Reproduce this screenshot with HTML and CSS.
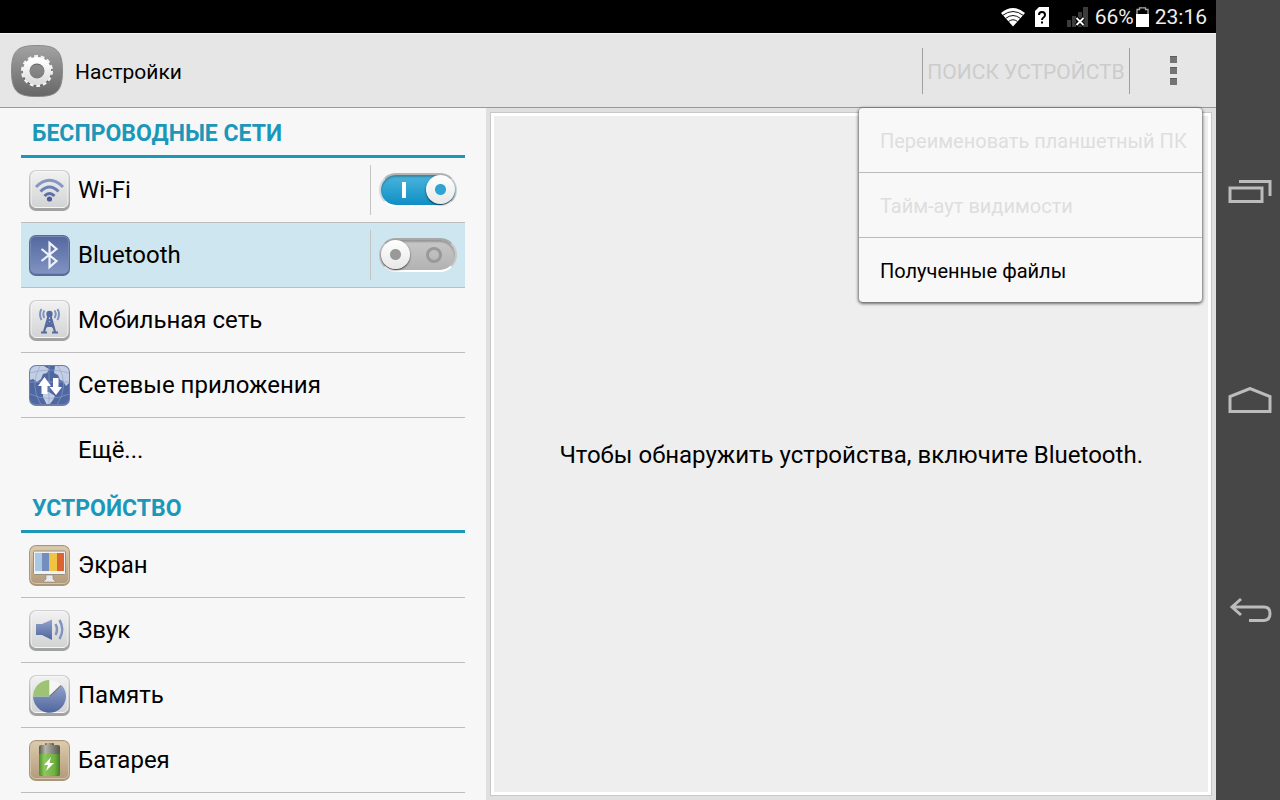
FILE: index.html
```html
<!DOCTYPE html>
<html lang="ru">
<head>
	<meta charset="UTF-8">
	<meta name="viewport" content="width=device-width, initial-scale=1">
	<title>Настройки</title>
	<link rel="stylesheet" href="styles.css">
</head>
<body>
	<!-- shared gradients for the icons -->
	<svg class="defs" width="0" height="0" aria-hidden="true">
		<defs>
			<linearGradient id="light" x1="0" y1="0" x2="0" y2="1">
				<stop offset="0" stop-color="#f1f1f1"/><stop offset="1" stop-color="#d2d3d4"/>
			</linearGradient>
			<linearGradient id="edge" x1="0" y1="0" x2="0" y2="1">
				<stop offset="0" stop-color="#d0d0d0"/><stop offset="1" stop-color="#a0a0a0"/>
			</linearGradient>
			<linearGradient id="blue" x1="0" y1="0" x2="0" y2="1">
				<stop offset="0" stop-color="#5468a0"/><stop offset="1" stop-color="#8093c2"/>
			</linearGradient>
			<linearGradient id="ink" x1="0" y1="0" x2="0" y2="1">
				<stop offset="0" stop-color="#91a2cb"/><stop offset="1" stop-color="#4f659c"/>
			</linearGradient>
			<linearGradient id="tan" x1="0" y1="0" x2="0" y2="1">
				<stop offset="0" stop-color="#dccbab"/><stop offset="1" stop-color="#b39b7c"/>
			</linearGradient>
			<linearGradient id="gray" x1="0" y1="0" x2="0" y2="1">
				<stop offset="0" stop-color="#a3a3a3"/><stop offset="1" stop-color="#666"/>
			</linearGradient>
			<linearGradient id="gear" x1="0" y1="0" x2="0" y2="1">
				<stop offset="0" stop-color="#fff"/><stop offset="1" stop-color="#dedede"/>
			</linearGradient>
			<linearGradient id="green" x1="0" y1="0" x2="1" y2="0">
				<stop offset="0" stop-color="#4f8c2c"/><stop offset=".25" stop-color="#8dc85c"/><stop offset=".75" stop-color="#6fb040"/><stop offset="1" stop-color="#437d24"/>
			</linearGradient>
			<linearGradient id="metal" x1="0" y1="0" x2="1" y2="0">
				<stop offset="0" stop-color="#585852"/><stop offset=".3" stop-color="#b5b5ac"/><stop offset="1" stop-color="#55554f"/>
			</linearGradient>
			<clipPath id="tile"><rect x="1" y="1" width="39" height="38" rx="6"/></clipPath>
		</defs>
	</svg>

	<div class="screen">
		<div class="status-bar">
			<svg class="st-wifi" width="26" height="20" viewBox="0 0 26 20" aria-label="Wi-Fi">
				<path d="M13 19.500 1 6Q13-4 25 6Z" fill="#fff"/>
				<path d="M2.500 8.500Q13 .5 23.500 8.500M5.500 11.500Q13 5.500 20.500 11.500M8.500 14.500Q13 11 17.500 14.500" fill="none" stroke="#111" stroke-width="1"/>
			</svg>
			<svg class="st-sim" width="14" height="20" viewBox="0 0 14 20" aria-label="SIM">
				<path d="M4 0H14V20H0V4Z" fill="#fff"/>
				<path d="M4 8Q4 5 7 5T10 8Q10 9.500 8.500 10.500T7 13" fill="none" stroke="#000" stroke-width="2"/>
				<path d="M6 14.500h2v2H6z"/>
			</svg>
			<svg class="st-signal" width="21" height="20" viewBox="0 0 21 20" aria-label="Нет сигнала">
				<path d="M0 13h4v7H0zM5 9h4v11H5zM11 5h4v15h-4zM16 0h5v20h-5z" fill="#3c3c3c"/>
				<path d="M9.500 11 16.500 18M16.500 11 9.500 18" stroke="#000" stroke-width="4"/>
				<path d="M9.500 11 16.500 18M16.500 11 9.500 18" stroke="#fff" stroke-width="1.800"/>
			</svg>
			<span>66%</span>
			<svg class="st-battery" width="13" height="20" viewBox="0 0 13 20" aria-hidden="true">
				<path d="M1 8V2.500H3.500V.8H9.500V2.500H12V8" fill="none" stroke="#aaa" stroke-width="1.300"/>
				<path d="M0 7H13V20H0Z" fill="#fff"/>
			</svg>
			<time>23:16</time>
		</div>

		<header class="action-bar">
			<svg class="app-icon" width="52" height="52" viewBox="0 0 52 52" aria-hidden="true">
				<path d="M26 .5C45 .5 51.500 5 51.500 26S45 51.500 26 51.500.5 47 .5 26 7 .5 26 .5Z" fill="url(#gray)" stroke="#8b8b8b"/>
				<circle cx="26" cy="27" r="11" fill="none" stroke="#666" stroke-width="7"/>
				<circle cx="26" cy="26" r="14.500" fill="none" stroke="#f2f2f2" stroke-width="3" stroke-dasharray="3.800 2.708"/>
				<circle cx="26" cy="26" r="10.800" fill="none" stroke="url(#gear)" stroke-width="6.600"/>
			</svg>
			<h1>Настройки</h1>
			<button class="search-button" type="button" disabled>ПОИСК УСТРОЙСТВ</button>
			<button class="more-button" type="button" aria-label="Ещё" aria-expanded="true">
				<i></i><i></i><i></i>
			</button>
			<div class="menu">
				<button type="button" disabled>Переименовать планшетный ПК</button>
				<button type="button" disabled>Тайм-аут видимости</button>
				<button type="button">Полученные файлы</button>
			</div>
		</header>

		<div class="content">
			<nav class="settings">
				<h2>БЕСПРОВОДНЫЕ СЕТИ</h2>
				<ul>
					<li>
						<a href="#wifi">
							<svg class="icon" viewBox="0 0 41 41" aria-hidden="true">
								<rect width="41" height="41" rx="7" fill="url(#edge)"/>
								<rect x="2" y="1.500" width="37" height="36" rx="5" fill="url(#light)" stroke="#f6f6f6"/>
								<g fill="none" stroke="#8597c4" stroke-width="3">
									<path d="M7 17Q20.500 3.500 34 17"/>
									<path d="M11.500 21.500Q20.500 12.500 29.500 21.500" stroke="#6c80b2"/>
									<path d="M15.500 26Q20.500 21 25.500 26" stroke="#5a6fa5"/>
								</g>
								<circle cx="20.500" cy="29" r="2.600" fill="#4a5f98"/>
							</svg>
							Wi-Fi
						</a>
						<span class="switch"><input type="checkbox" aria-label="Wi-Fi" checked></span>
					</li>
					<li class="active">
						<a href="#bluetooth">
							<svg class="icon" viewBox="0 0 41 41" aria-hidden="true">
								<rect width="41" height="41" rx="7" fill="#5b6b99"/>
								<rect x="1.500" y="1.500" width="38" height="37" rx="5" fill="url(#blue)" stroke="#7788b6"/>
								<path d="M12.500 14 27.500 26 20.500 32V8L27.500 14 12.500 26" fill="none" stroke="#eef1f8" stroke-width="2.200"/>
							</svg>
							Bluetooth
						</a>
						<span class="switch"><input type="checkbox" aria-label="Bluetooth"></span>
					</li>
					<li>
						<a href="#mobile">
							<svg class="icon" viewBox="0 0 41 41" aria-hidden="true">
								<rect width="41" height="41" rx="7" fill="url(#edge)"/>
								<rect x="2" y="1.500" width="37" height="36" rx="5" fill="url(#light)" stroke="#f6f6f6"/>
								<path d="M15.500 10.500Q13 14 15.500 18M25.500 10.500Q28 14 25.500 18M12.500 9Q9.500 14 12.500 20M28.500 9Q31.500 14 28.500 20" fill="none" stroke="#7f91bd" stroke-width="2"/>
								<g fill="none" stroke="#566b9f" stroke-width="2.200">
									<path d="M19.500 16 15 32M21.500 16 26 32M18 20H23M17 26H24M24 27 18 21M17 27 23 21" />
									<path d="M12 32.500H18M23 32.500H29"/>
								</g>
								<circle cx="20.500" cy="14" r="3.200" fill="#566b9f"/>
							</svg>
							Мобильная сеть
						</a>
					</li>
					<li>
						<a href="#apps">
							<svg class="icon" viewBox="0 0 41 41" aria-hidden="true">
								<rect width="41" height="41" rx="7" fill="#6e7ea6"/>
								<g clip-path="url(#tile)">
									<path d="M1 1H40V40H1Z" fill="#5068a2"/>
									<path d="M1 1H15L20 4 18 8 14 9 12 14 8 17 4 14 1 15ZM26 1H40V18L37 21 34 16 31 15 29 10 25 8ZM14 27 20 27 26 31 24 35 20 40H18L14 32Z" fill="#c3cee2"/>
									<path d="M20 1V40M1 17H40M1 29Q20 38 40 29M11 1Q0 20 12 40M29 1Q41 20 28 40M1 8Q20 2 40 8" fill="none" stroke="#8fa2cc" stroke-width=".6"/>
								</g>
								<path d="M9 21 15.500 12 22 21H18.500V29H12.500V21ZM20.500 22H24V13H29.500V22H33L27 30Z" fill="#fff"/>
							</svg>
							Сетевые приложения
						</a>
					</li>
					<li class="last"><a class="no-icon" href="#more">Ещё...</a></li>
				</ul>

				<h2>УСТРОЙСТВО</h2>
				<ul>
					<li>
						<a href="#display">
							<svg class="icon" viewBox="0 0 41 41" aria-hidden="true">
								<rect width="41" height="41" rx="7" fill="#a8977c"/>
								<rect x="1.500" y="1.500" width="38" height="37" rx="5" fill="url(#tan)" stroke="#d3c3a6"/>
								<rect x="4.500" y="6" width="32" height="23.500" rx="1" fill="#f1f1f1" stroke="#9a907e"/>
								<path d="M6 8h7v18H6z" fill="#a9c8e3"/><path d="M13 8h7v18h-7z" fill="#738dbc"/>
								<path d="M20 8h8v18h-8z" fill="#efc343"/><path d="M28 8h7v18h-7z" fill="#dc6433"/>
								<path d="M17 30H24V34L27 37H14L17 34Z" fill="#e9e9e9" stroke="#888" stroke-width=".6"/>
							</svg>
							Экран
						</a>
					</li>
					<li>
						<a href="#sound">
							<svg class="icon" viewBox="0 0 41 41" aria-hidden="true">
								<rect width="41" height="41" rx="7" fill="url(#edge)"/>
								<rect x="2" y="1.500" width="37" height="36" rx="5" fill="url(#light)" stroke="#f6f6f6"/>
								<path d="M7 14H13L23 9.500V30L13 25H7Z" fill="url(#ink)"/>
								<path d="M26.500 14Q29.500 19.500 26.500 25M30.500 10Q36 19.500 30.500 29" fill="none" stroke="#8293bd" stroke-width="2.500"/>
							</svg>
							Звук
						</a>
					</li>
					<li>
						<a href="#storage">
							<svg class="icon" viewBox="0 0 41 41" aria-hidden="true">
								<rect width="41" height="41" rx="7" fill="url(#edge)"/>
								<rect x="2" y="1.500" width="37" height="36" rx="5" fill="url(#light)" stroke="#f6f6f6"/>
								<path d="M4 21.500H20.500L33 10.500A16.500 16.500 0 1 1 4 21.500Z" fill="url(#ink)"/>
								<path d="M20.500 21.500H4A16.500 16.500 0 0 1 20.500 5Z" fill="#9dc375"/>
								<path d="M20.500 21.500V5Q28 5 32 10Z" fill="#f5f5f5"/>
								<path d="M20.500 21.500 32 10.500" stroke="#777" stroke-width="1.200"/>
							</svg>
							Память
						</a>
					</li>
					<li>
						<a href="#battery">
							<svg class="icon" viewBox="0 0 41 41" aria-hidden="true">
								<rect width="41" height="41" rx="7" fill="#a8977c"/>
								<rect x="1.500" y="1.500" width="38" height="37" rx="5" fill="url(#tan)" stroke="#d3c3a6"/>
								<rect x="16" y="3" width="9" height="4" rx="1" fill="url(#metal)"/>
								<rect x="10" y="5" width="21" height="31" rx="2" fill="url(#metal)"/>
								<path d="M10 14H31V35Q20.500 37 10 35Z" fill="url(#green)"/>
								<path d="M22 17 15 25H19L17 31 25 23H20.500Z" fill="#fff"/>
							</svg>
							Батарея
						</a>
					</li>
				</ul>
			</nav>

			<main class="detail">
				<p>Чтобы обнаружить устройства, включите Bluetooth.</p>
			</main>
		</div>
	</div>

	<div class="nav-bar">
		<button type="button" aria-label="Недавние">
			<svg width="44" height="26" viewBox="0 0 44 26"><path d="M2 10H34V23.500H2ZM11 3.500H42V18" /></svg>
		</button>
		<button type="button" aria-label="Домой">
			<svg width="44" height="26" viewBox="0 0 44 26"><path d="M2 24.500V9.500L22 1.500 42 9.500V24.500Z"/></svg>
		</button>
		<button type="button" aria-label="Назад">
			<svg width="44" height="26" viewBox="0 0 44 26"><path d="M13 3 4 11 13 19M4 11H36Q42 11 42 17.500T36 24.500H21"/></svg>
		</button>
	</div>
</body>
</html>
```
FILE: styles.css
```css
*, *::before, *::after {
	box-sizing: border-box;
}
body {
	margin: 0;
	display: flex;
	height: 100vh;
	overflow: hidden;
	font-family: Roboto, "Noto Sans", sans-serif;
	color: #000;
	background: #f7f7f7;
}
button {
	font: inherit;
	color: inherit;
	border: 0;
	padding: 0;
	background: none;
}
h1, h2, p, ul {
	margin: 0;
	padding: 0;
	font-weight: normal;
}
svg {
	flex: none;
}
.defs {
	position: absolute;
}

.screen {
	flex: 1;
	min-width: 0;
	display: flex;
	flex-direction: column;
}

/* status bar */
.status-bar {
	height: 33px;
	flex: none;
	display: flex;
	align-items: center;
	justify-content: flex-end;
	padding: 0 9px;
	background: #000;
	color: #eee;
	font-size: 21px;
}
.st-wifi {
	margin-right: 9px;
}
.st-sim {
	margin-right: 18px;
}
.st-signal {
	margin-right: 7px;
}
.st-battery {
	margin: 0 6px 0 2px;
}

/* action bar */
.action-bar {
	position: relative;
	height: 75px;
	flex: none;
	display: flex;
	align-items: center;
	padding-left: 11px;
	background: #e6e6e6;
	border-top: 1px solid #f5f5f5;
	border-bottom: 1px solid #999;
}
.action-bar h1 {
	flex: 1;
	margin-left: 12px;
	padding-top: 2px;
	font-size: 21px;
}
.search-button {
	width: 208px;
	height: 46px;
	padding-top: 2px;
	border: solid #a0a0a0;
	border-width: 0 1px;
	font-size: 21px;
	color: #ccc;
	white-space: nowrap;
}
.more-button {
	width: 86px;
	height: 74px;
	display: flex;
	flex-direction: column;
	align-items: center;
	justify-content: center;
	gap: 4px;
}
.more-button i {
	width: 7px;
	height: 7px;
	background: #747474;
	border-top: 1px solid #5c5c5c;
}

.menu {
	position: absolute;
	z-index: 1;
	top: 74px;
	right: 14px;
	width: 343px;
	background: #f8f8f8;
	border-radius: 4px;
	box-shadow: 0 1px 3px 1px rgba(0,0,0,0.55);
}
.menu button {
	display: block;
	width: 100%;
	height: 65px;
	padding: 2px 21px 0;
	text-align: left;
	font-size: 20px;
	white-space: nowrap;
	border-bottom: 1px solid #bbb;
}
.menu button:last-child {
	height: 64px;
	border-bottom: 0;
}
.menu button:disabled {
	color: #dedede;
}

/* settings list */
.content {
	flex: 1;
	min-height: 0;
	display: flex;
}
.settings {
	width: 40%;
	padding: 0 21px;
	overflow: hidden;
}
.settings h2 {
	height: 50px;
	padding-left: 11px;
	border-bottom: 3px solid #1b97b9;
	color: #1b97b9;
	font-size: 23px;
	font-weight: bold;
	line-height: 52px;
}
.settings ul {
	list-style: none;
}
.settings li {
	display: flex;
	align-items: center;
	height: 65px;
	border-bottom: 1px solid #bdbdbd;
}
.settings li.active {
	background: #cde6ef;
}
.settings li.last {
	border-bottom-color: transparent;
}
.settings a {
	flex: 1;
	display: flex;
	align-items: center;
	gap: 8px;
	padding-left: 8px;
	font-size: 24px;
	line-height: 64px;
	color: inherit;
	text-decoration: none;
}
.settings a.no-icon {
	padding-left: 57px;
}
.icon {
	width: 41px;
	height: 41px;
}

.switch {
	display: flex;
	align-items: center;
	height: 50px;
	padding: 0 8px;
	border-left: 1px solid #c4c4c4;
}
.switch input {
	appearance: none;
	position: relative;
	width: 78px;
	height: 34px;
	margin: 0;
	border: 2px solid;
	border-color: #a8a8a8 #c8c8c8 #fff;
	border-radius: 17px;
	background: linear-gradient(#c8c8c8, #b2b2b2);
	box-shadow: inset 0 2px 2px rgba(0,0,0,0.25);
}
.switch input:checked {
	border-color: #b5b5b5 #d0d8dc #fff;
	background: linear-gradient(#4bb5dd, #0e8fc4);
}
/* knob */
.switch input::before {
	content: "";
	position: absolute;
	top: 0;
	left: 0;
	width: 29px;
	height: 29px;
	border-radius: 50%;
	background: radial-gradient(circle, #999 5px, transparent 6px), linear-gradient(#fff, #e8e8e8);
	box-shadow: 0 1px 2px rgba(0,0,0,0.7);
}
.switch input:checked::before {
	left: auto;
	right: 0;
	background: radial-gradient(circle, #2fa3d2 5px, transparent 6px), linear-gradient(#fff, #e8e8e8);
}
/* on / off mark */
.switch input::after {
	content: "";
	position: absolute;
	top: 7px;
	right: 13px;
	width: 16px;
	height: 16px;
	border: 3px solid #999;
	border-radius: 50%;
}
.switch input:checked::after {
	left: 21px;
	width: 4px;
	border: 0;
	border-radius: 0;
	background: #fff;
}

/* detail pane */
.detail {
	flex: 1;
	display: flex;
	align-items: center;
	justify-content: center;
	margin: 4px;
	border: 1px solid #c8c8c8;
	background: #eee;
	box-shadow: 0 0 0 4px #e0e0e0, inset 0 0 0 3px #fff;
}
.detail p {
	padding-top: 2px;
	font-size: 24px;
	text-align: center;
}

/* navigation keys */
.nav-bar {
	width: 64px;
	flex: none;
	display: flex;
	flex-direction: column;
	align-items: center;
	justify-content: center;
	padding-left: 4px;
	background: #474747;
}
.nav-bar button {
	height: 209px;
}
.nav-bar svg {
	display: block;
	fill: none;
	stroke: #bcbcbc;
	stroke-width: 3;
}
```
